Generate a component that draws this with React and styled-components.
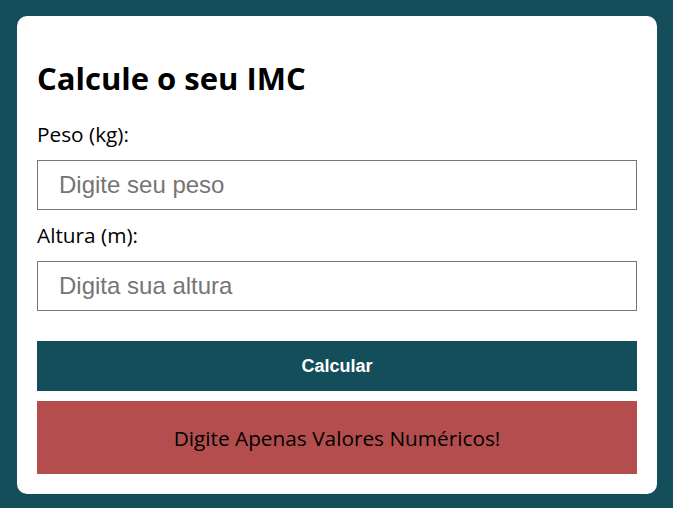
import React, { useState } from "react";
import styled, { createGlobalStyle } from "styled-components";

const GlobalStyle = createGlobalStyle`
  html, body {
    margin: 0;
    padding: 0;
    background-color: #154e5b;
  }
  body {
    font-family: "Open Sans", sans-serif;
  }
`;

const Page = styled.div`
  min-height: 508px;
  padding: 16px 16px 14px 17px;
  box-sizing: border-box;
`;

const Card = styled.div`
  width: 640px;
  background-color: #fff;
  border-radius: 10px;
  padding: 20px;
  box-sizing: border-box;
`;

const Title = styled.h1`
  font-family: "Open Sans", sans-serif;
  font-size: 31px;
  font-weight: 700;
  color: #000;
  margin: 21px 0 22px 0;
  line-height: 42px;
`;

const Field = styled.div`
  display: flex;
  flex-direction: column;
  margin-bottom: ${(p) => (p.$last ? "30px" : "12px")};
`;

const Label = styled.label`
  font-family: "Open Sans", sans-serif;
  font-size: 20.8px;
  line-height: 27px;
  color: #000;
  margin-bottom: 12px;
`;

const Input = styled.input`
  width: 600px;
  height: 50px;
  box-sizing: border-box;
  border: 1px solid #767676;
  padding: 0 21px;
  font-family: "Liberation Sans", Arial, sans-serif;
  font-size: 24px;
  color: #000;
  background: #fff;
  outline: none;

  &::placeholder {
    color: #757575;
  }
`;

const Button = styled.button`
  width: 600px;
  height: 50px;
  border: none;
  background-color: #154e5b;
  color: #fff;
  font-family: "Liberation Sans", Arial, sans-serif;
  font-weight: 700;
  font-size: 18px;
  cursor: pointer;
  display: block;
`;

const Message = styled.div`
  width: 600px;
  height: 73px;
  margin-top: 10px;
  background-color: #b44e4e;
  color: #000;
  font-family: "Open Sans", sans-serif;
  font-size: 20.8px;
  display: flex;
  align-items: center;
  justify-content: center;
`;

const App = () => {
  const [peso, setPeso] = useState("");
  const [altura, setAltura] = useState("");

  return (
    <>
      <GlobalStyle />
      <Page>
        <Card>
          <Title>Calcule o seu IMC</Title>
          <Field>
            <Label>Peso (kg):</Label>
            <Input
              placeholder="Digite seu peso"
              value={peso}
              onChange={(e) => setPeso(e.target.value)}
            />
          </Field>
          <Field $last>
            <Label>Altura (m):</Label>
            <Input
              placeholder="Digita sua altura"
              value={altura}
              onChange={(e) => setAltura(e.target.value)}
            />
          </Field>
          <Button>Calcular</Button>
          <Message>Digite Apenas Valores Numéricos!</Message>
        </Card>
      </Page>
    </>
  );
};

export default App;
